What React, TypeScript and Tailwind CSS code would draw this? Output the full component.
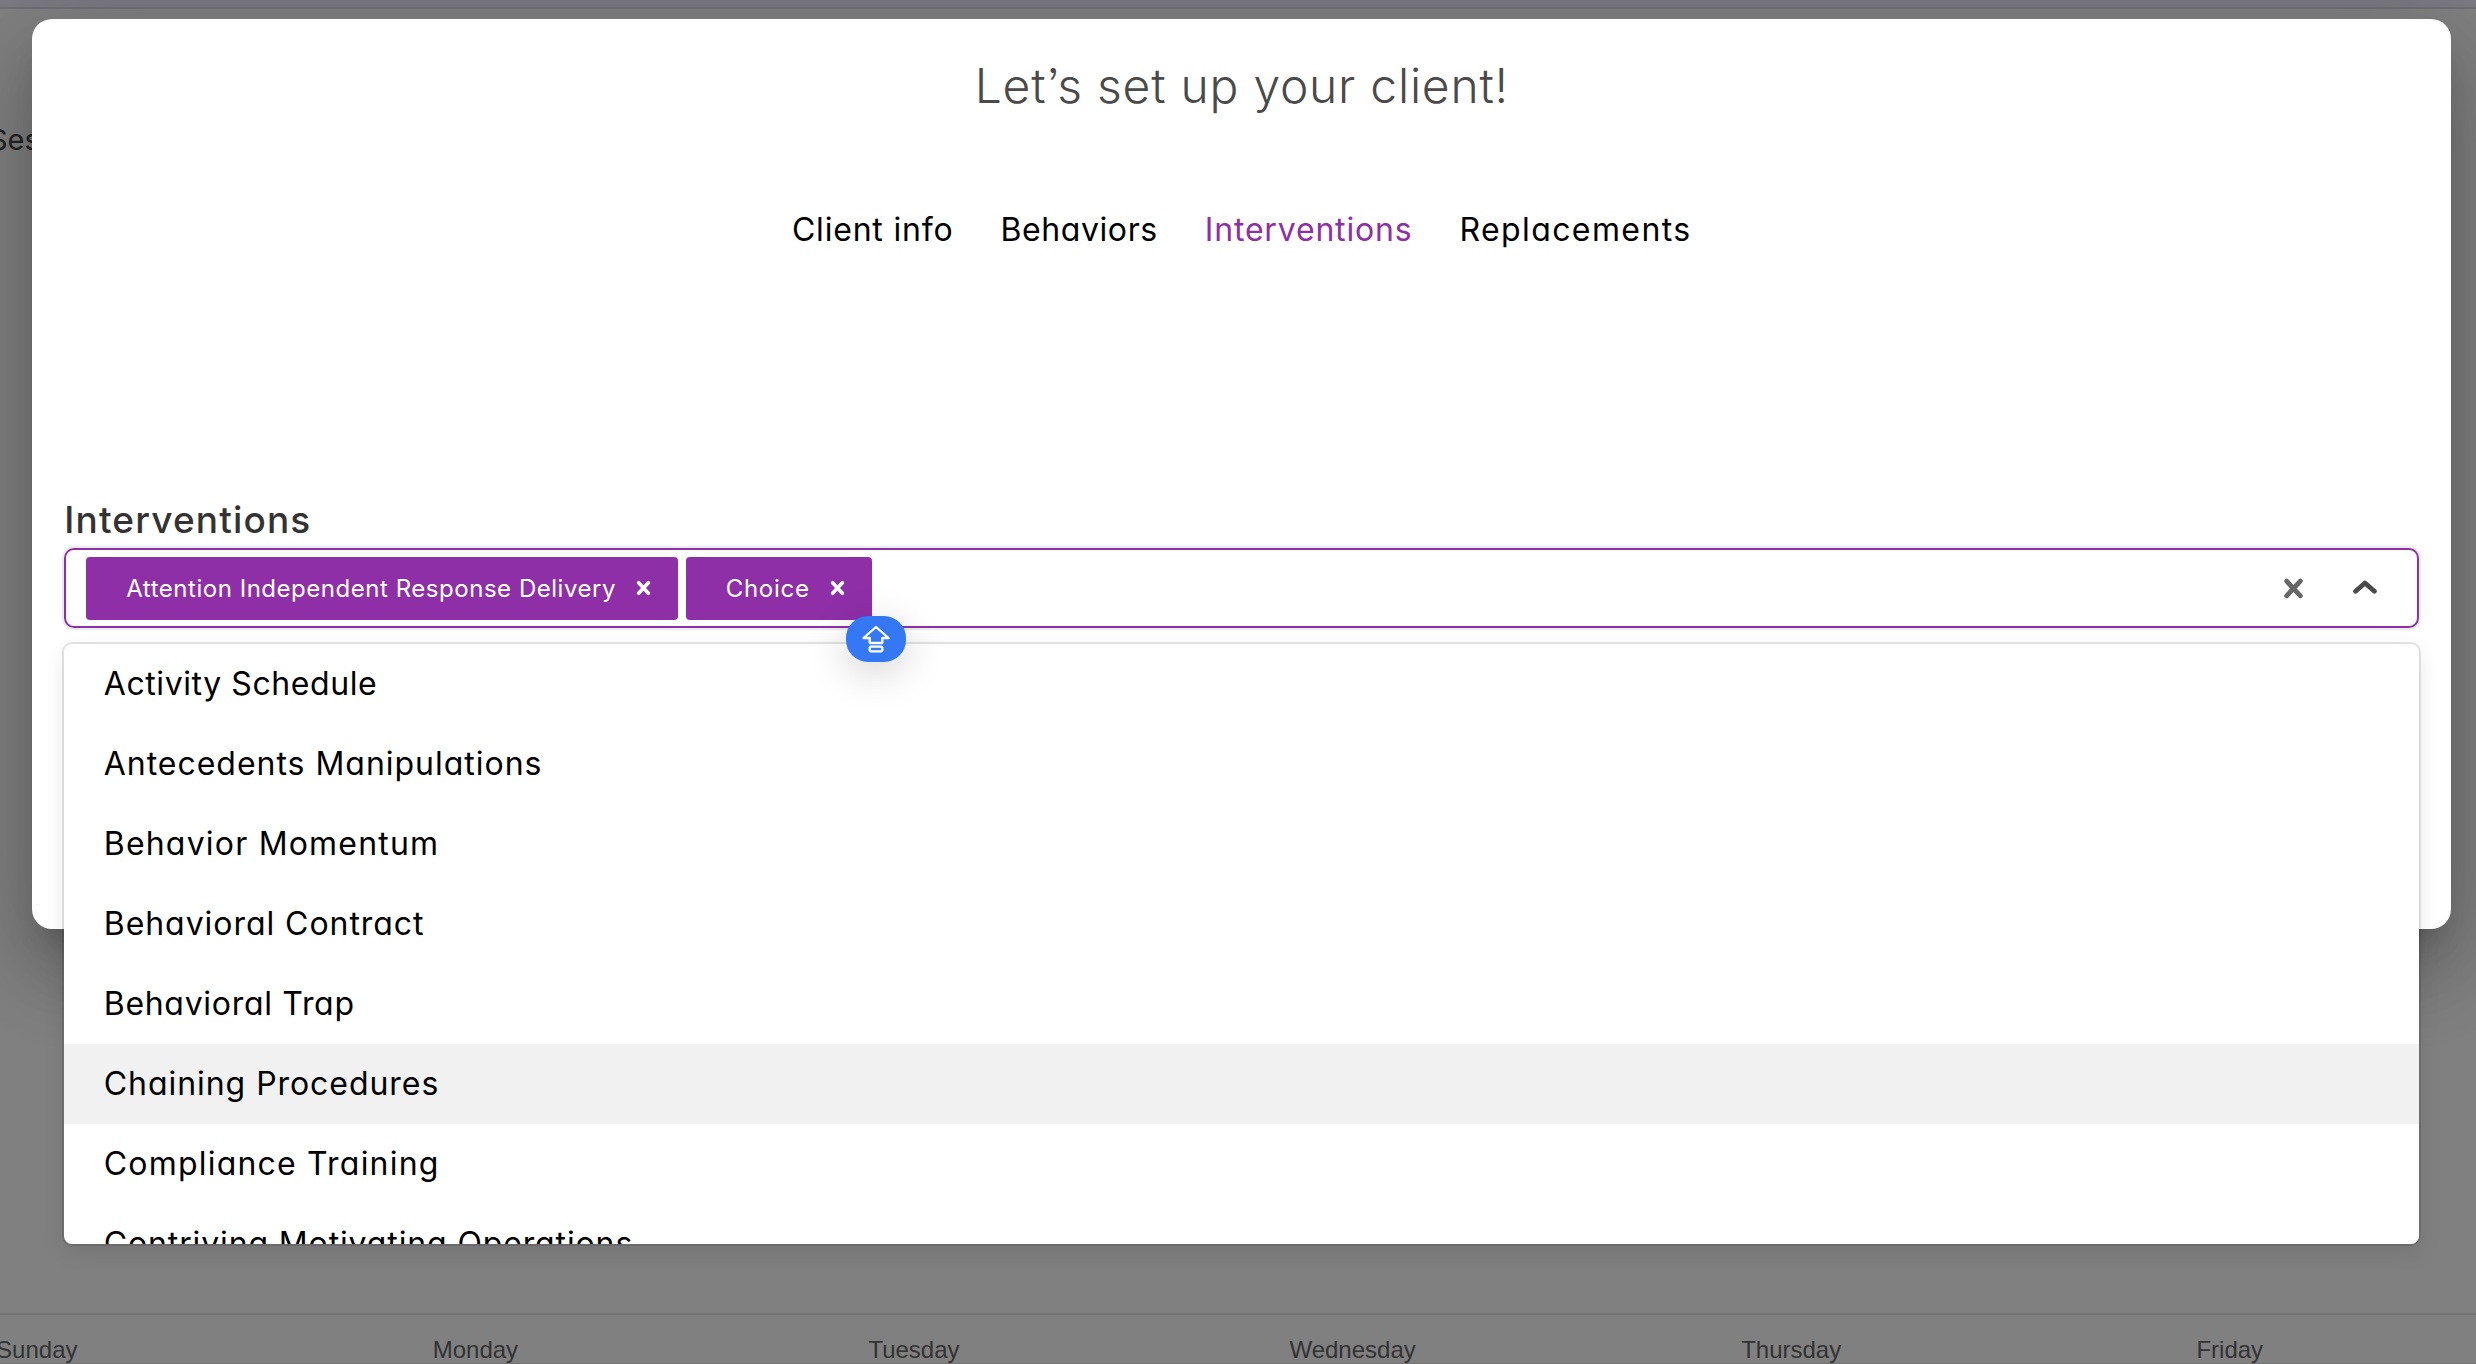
const weekdays = ["Sunday", "Monday", "Tuesday", "Wednesday", "Thursday", "Friday"];

const tabs = [
  { label: "Client info", className: "tracking-[0.8px] text-black" },
  { label: "Behaviors", className: "tracking-[0.6px] text-black" },
  { label: "Interventions", className: "tracking-[0.82px] text-[#8e2fa8]" },
  { label: "Replacements", className: "tracking-[1.4px] text-black" },
];

const options = [
  { label: "Activity Schedule", className: "tracking-[0.58px]" },
  { label: "Antecedents Manipulations", className: "tracking-[0.98px]" },
  { label: "Behavior Momentum", className: "tracking-[1.2px]" },
  { label: "Behavioral Contract", className: "tracking-[0.95px]" },
  { label: "Behavioral Trap", className: "tracking-[0.7px]" },
  { label: "Chaining Procedures", className: "tracking-[0.95px] bg-[#f1f1f1]" },
  { label: "Compliance Training", className: "tracking-[1.2px]" },
  { label: "Contriving Motivating Operations", className: "tracking-[0.87px]" },
];

function Cross({ className, strokeWidth }: { className: string; strokeWidth: number }) {
  return (
    <svg viewBox="0 0 20 20" className={className} fill="none" stroke="currentColor" strokeWidth={strokeWidth} strokeLinecap="round">
      <path d="M3.500 3 16.500 17M16.500 3 3.500 17" />
    </svg>
  );
}

function Tag({ label, className }: { label: string; className: string }) {
  return (
    <div className={`flex h-[63px] items-center justify-between rounded-[4px] bg-[#8e2fa8] pr-[27px] pl-[40px] text-2xl text-white ${className}`}>
      <span className="pt-px">{label}</span>
      <Cross className="h-[16px] w-[15px] shrink-0" strokeWidth={4.8} />
    </div>
  );
}

function Background() {
  return (
    <div className="absolute inset-0 flex flex-col bg-[#808080]">
      <div className="h-[9px] shrink-0 border-b-2 border-[#707072] bg-[#7b7a82]" />
      <div className="mt-[111px] -ml-[11px] h-10 text-[29px] leading-10 text-[#222]">Sess</div>
      <div className="mt-auto flex h-[51px] w-[3070px] shrink-0 -ml-[182.500px] items-start border-t-2 border-b border-[#737373] font-['Liberation_Sans',sans-serif] text-2xl text-[#333]">
        {weekdays.map((day) => (
          <div key={day} className="mt-[19px] w-[438.6px] text-center leading-8">
            {day}
          </div>
        ))}
      </div>
    </div>
  );
}

function Select() {
  return (
    <div className="relative mt-[4px] ml-[32px] w-[2355px]">
      <div className="flex h-[80px] items-center rounded-[10px] border-2 border-[#8e2fa8] pl-5 shadow-[0_0_0_2px_rgba(0,0,0,0.08)]">
        <Tag label="Attention Independent Response Delivery" className="w-[591.5px] tracking-[0.53px]" />
        <Tag label="Choice" className="ml-2 w-[186px] tracking-[0.7px]" />
        <Cross className="ml-auto h-[23px] w-[21px] text-[#666]" strokeWidth={4.6} />
        <svg viewBox="0 0 24 14" className="mr-[40px] ml-[49px] mb-[2px] h-[14px] w-[24px] text-[#4a4a4a]" fill="none" stroke="currentColor" strokeWidth="4.8" strokeLinecap="round" strokeLinejoin="round">
          <path d="M2.6 11.2 12 3l9.400 8.200" />
        </svg>
      </div>
      <ul className="absolute top-[96px] left-0 z-10 h-[600px] w-full overflow-hidden rounded-[8px] bg-white text-[32px] text-black shadow-[0_0_0_2px_rgba(0,0,0,0.1),0_8px_22px_rgba(0,0,0,0.1)]">
        {options.map((o) => (
          <li key={o.label} className={`h-20 pl-[39.500px] leading-[80px] ${o.className}`}>
            {o.label}
          </li>
        ))}
      </ul>
      <div className="absolute top-[68px] left-[782px] z-20 flex h-[46px] w-[60px] items-center justify-center rounded-[22px] bg-[#3478f6] shadow-[0_10px_40px_rgba(0,0,0,0.18)]">
        <svg viewBox="0 0 28 28" className="h-[28px] w-[28px]" fill="none" stroke="white" strokeWidth="2.300" strokeLinejoin="round">
          <path d="M14 2 26.500 13H20.300V18H7.700V13H1.500Z" />
          <rect x="7.700" y="21.600" width="12.600" height="4.800" rx="1" />
        </svg>
      </div>
    </div>
  );
}

export default function App() {
  return (
    <div className="relative h-[1364px] w-full overflow-hidden font-['Inter',sans-serif] [font-feature-settings:'cv11','ss03']">
      <Background />
      <main className="relative mt-[19px] ml-[32.25px] flex h-[910px] w-[2419px] flex-col rounded-[20px] bg-white pt-[39px] shadow-[0_22px_30px_-14px_rgba(0,0,0,0.2),0_48px_76px_6px_rgba(0,0,0,0.14),0_18px_92px_16px_rgba(0,0,0,0.12)]">
        <h1 className="text-center text-[48px] leading-[56px] font-light tracking-[0.75px] text-[#4a4a4a]">Let’s set up your client!</h1>
        <nav className="mt-[92px] flex h-12 items-center justify-center gap-[47px] text-[32px] leading-[48px]">
          {tabs.map((t) => (
            <span key={t.label} className={t.className}>
              {t.label}
            </span>
          ))}
        </nav>
        <h2 className="mt-[242px] ml-[32px] text-[37px] leading-[48px] font-medium tracking-[1.15px] text-[#333]">Interventions</h2>
        <Select />
      </main>
    </div>
  );
}
